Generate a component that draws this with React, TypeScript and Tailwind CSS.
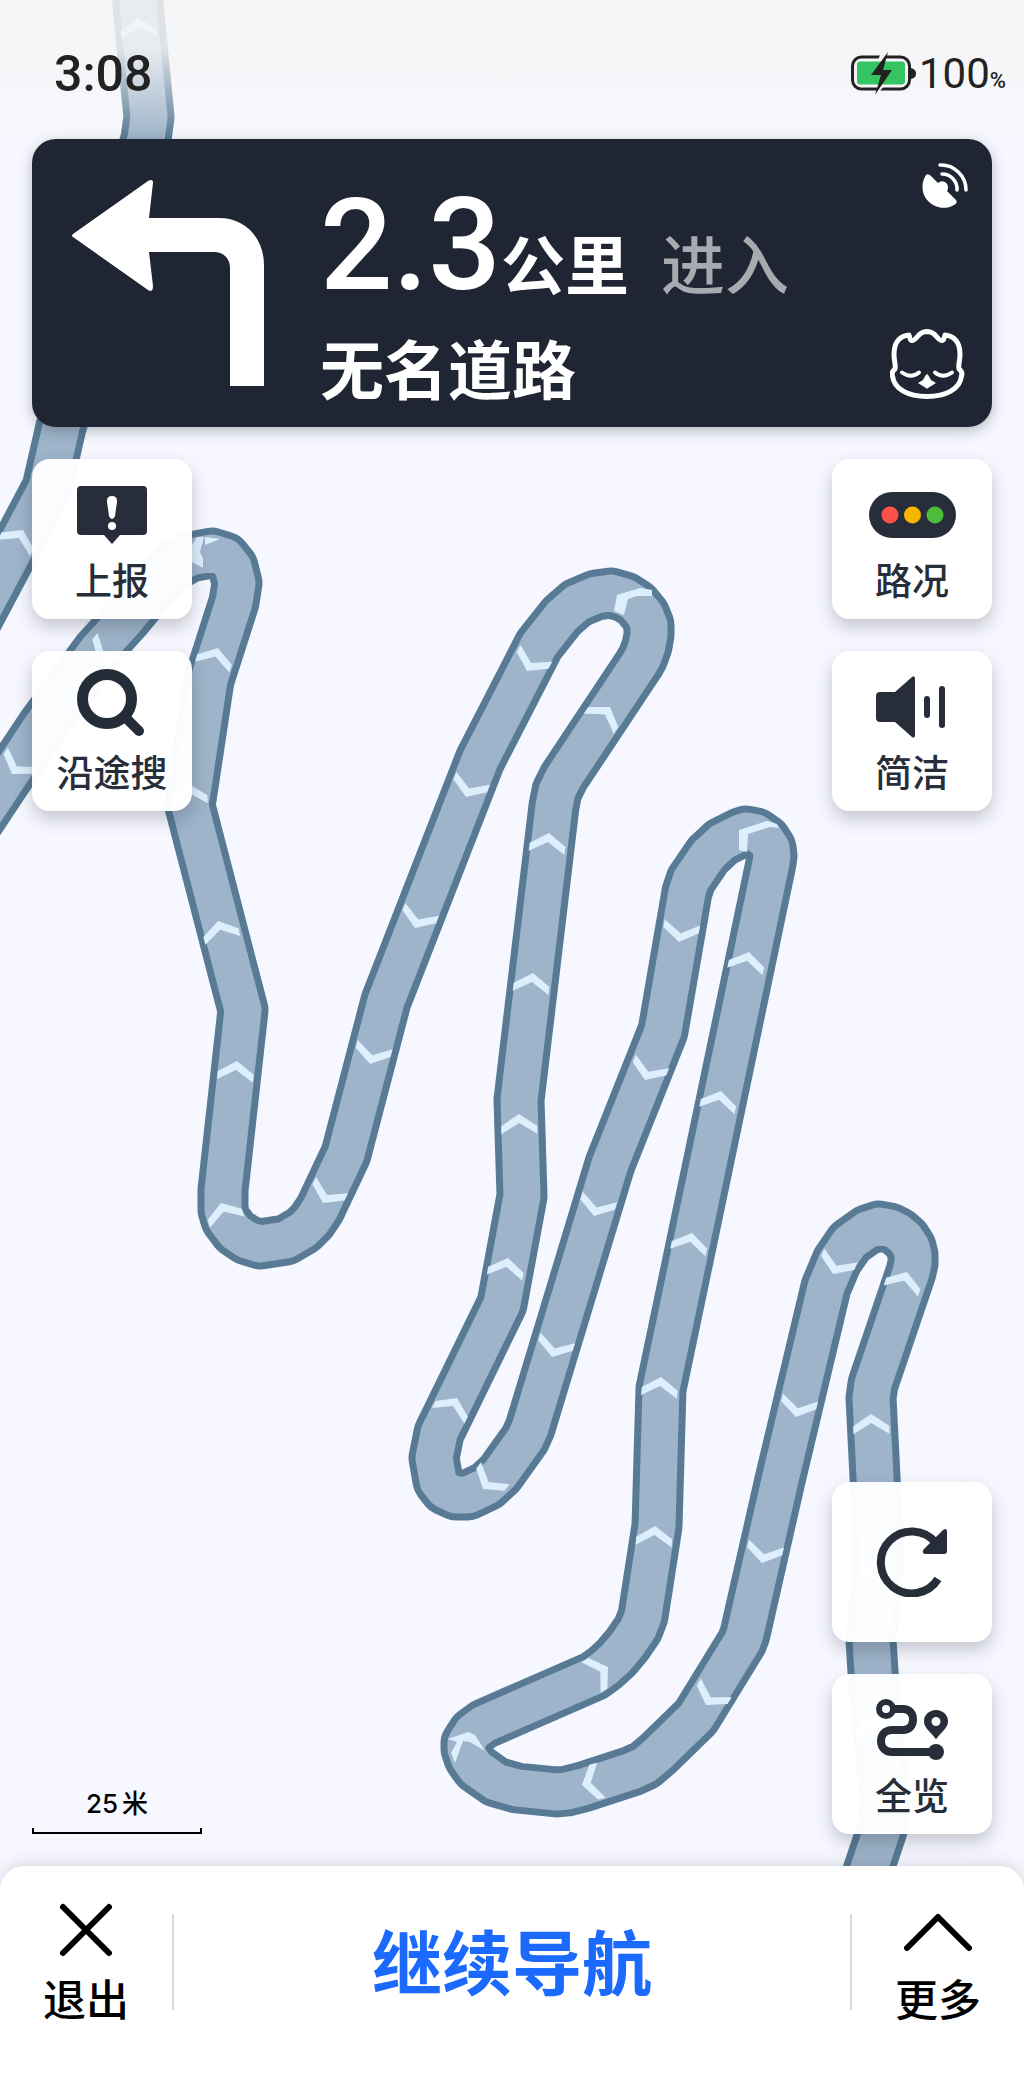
import type { ReactNode } from "react";

const ROADS = [
  "M138 -20 L138 5 L149 117 L146 139 L61 427 L47 488 L-40 652",
  "M-60 880 L42 726 L97 651 L126 619 L158 580 L172 567 L190 557 L212 553 L225 557 L233 567 L237 583 L234 602 L209 680 L190 806 L243 1010 L223 1190 L223 1210 L226 1220 L235 1232 L247 1240 L260 1244 L286 1240 L303 1230 L312 1221 L320 1209 L346 1154 L386 1001 L480 760 L539 645 L562 616 L577 603 L596 595 L611 593 L625 597 L636 604 L645 615 L649 625 L649 635 L647 646 L643 657 L639 664 L564 777 L557 791 L554 806 L519 1100 L522 1196 L502 1304 L439 1433 L434 1458 L438 1481 L445 1490 L456 1495 L468 1495 L487 1486 L500 1474 L525 1439 L530 1428 L610 1164 L663 1031 L687 892 L691 880 L708 855 L722 842 L740 833 L746 831 L756 833 L766 840 L771 848 L772 856 L771 863 L661 1389 L657 1526 L643 1616 L638 1629 L627 1645 L616 1658 L605 1668 L594 1676 L484 1724 L473 1732 L466 1743 L466 1749 L469 1758 L476 1768 L496 1782 L517 1788 L557 1792 L567 1791 L583 1787 L632 1771 L645 1765 L658 1754 L696 1717 L742 1642 L745 1634 L780 1480 L826 1287 L837 1261 L850 1242 L867 1230 L879 1226 L890 1228 L898 1232 L906 1239 L911 1247 L913 1255 L913 1263 L911 1272 L873 1384 L871 1398 L875 1477 L879 1560 L871 1640 L873 1672 L885 1800 L882 1830 L860 1895",
];

// [tip x, tip y, heading in degrees clockwise from north]
const ARROWS: [number, number, number][] = [
  [138, 18, -4], [23, 530, 27], [98, 660, 221], [12, 774, 213], [218, 648, 17],
  [189, 784, -2], [218, 921, -14], [237, 1061, 6], [221, 1203, -18], [323, 1203, 207],
  [370, 1064, 195], [415, 928, 201], [466, 797, 201], [527, 671, 208], [610, 707, 34],
  [549, 833, 7], [533, 973, 7], [519, 1114, -1], [508, 1258, 10], [457, 1398, 26],
  [483, 1489, 218], [552, 1357, 197], [594, 1216, 197], [645, 1080, 202], [679, 942, 190],
  [749, 952, 12], [721, 1091, 12], [692, 1233, 12], [661, 1377, 6], [655, 1526, 4],
  [608, 1667, 58], [582, 1785, 256], [706, 1705, 211], [762, 1563, 193], [796, 1417, 193],
  [833, 1274, 203], [907, 1272, 18], [871, 1414, -1], [876, 1560, 0], [874, 1716, 0],
];

const BENT_ARROWS = [
  "M617 595 L640 588 L652 590 L652 596 L637 596 L628 599 L624 615 L614 611 Z",
  "M739 830 L767 821 L777 824 L779 828 L770 827 L748 834 L747 852 L739 850 Z",
  "M448 1739 L468 1732 L475 1735 L485 1751 L470 1742 L463 1741 L455 1763 L451 1753 L457 1742 Z",
  "M192 545 L197 537 L204 537 L200 552 L203 558 L203 568 L192 562 Z M205 537 L220 539 L205 545 Z",
];

function RouteMap() {
  return (
    <svg
      className="absolute inset-0 h-full w-full"
      viewBox="0 0 1024 2089"
      preserveAspectRatio="xMidYMin slice"
      aria-hidden="true"
    >
      {ROADS.map((d) => (
        <g key={d} fill="none" strokeLinejoin="round">
          <path d={d} stroke="#587a95" strokeWidth="51" />
          <path d={d} stroke="#9eb4ca" strokeWidth="37" />
        </g>
      ))}
      <g fill="#ddeffd">
        {ARROWS.map(([x, y, a]) => (
          <path
            key={`${x}-${y}`}
            d="M0 0 L18 12 V20 L0 9 L-18 20 V12 Z"
            transform={`translate(${x} ${y}) rotate(${a})`}
          />
        ))}
        {BENT_ARROWS.map((d) => (
          <path key={d} d={d} />
        ))}
      </g>
    </svg>
  );
}

function BatteryIcon() {
  return (
    <svg width="66" height="43" viewBox="0 0 66 43" aria-label="充电中" role="img">
      <rect x="1.5" y="5" width="57" height="32" rx="9" fill="none" stroke="#222" strokeWidth="3" />
      <path d="M60 16 q5 1 5 5.500 q0 4.500 -5 5.500 Z" fill="#222" />
      <rect x="6" y="9.500" width="48" height="23" rx="3" fill="#33c464" />
      <path d="M29 3 H35 L31 8 H27 Z M27 34 H33 L29 39 H26 Z" fill="#f5f6f9" />
      <path d="M37 0 L20 23 H30 L24 43 L41 18 H32 Z" fill="#222" />
    </svg>
  );
}

function TurnLeftIcon() {
  return (
    <svg className="shrink-0" width="194" height="210" viewBox="0 0 194 210" fill="#fff" role="img" aria-label="左转">
      <path d="M1 55 L76 2 Q81 -1 81 4 L77 39 H147 C174 39 192 60 192 86 V207 H158 V89 C158 80 152 73 142 73 H77 L81 107 Q81 114 76 111 L1 58 Q-1 57 1 55 Z" />
    </svg>
  );
}

function SatelliteIcon() {
  return (
    <svg width="46" height="46" viewBox="0 0 46 46" role="img" aria-label="卫星信号">
      <path
        d="M4 12 Q6 10 9 13 L16 20 Q19 17 23 19 Q28 22 25 28 L34 37 Q36 40 32 42 C22 48 9 44 3 34 C-1 27 0 18 4 12 Z"
        fill="#fff"
      />
      <g fill="none" stroke="#fff" strokeWidth="3.500" strokeLinecap="round">
        <path d="M20 11 A15 15 0 0 1 35 27" />
        <path d="M18 2 A25 25 0 0 1 44 27" />
      </g>
    </svg>
  );
}

function OwlIcon() {
  return (
    <svg width="78" height="70" viewBox="0 0 78 70" role="img" aria-label="语音助手">
      <g fill="none" stroke="#fff" strokeLinecap="round" strokeLinejoin="round">
        <path
          strokeWidth="5"
          d="M37 2.500 Q31 3 28 7 Q24 12 21.500 11.500 Q20 11 19 6 C10 7 4 13 4 25 C4 33 6 35 5 40 Q1 43 2.500 47 C4 60 18 67.500 37 67.500 C56 67.500 70 60 71.500 47 Q73 43 69 40 C68 35 70 33 70 25 C70 13 64 7 55 6 Q54 11 52.500 11.500 Q50 12 46 7 Q43 3 37 2.500 Z"
        />
        <path strokeWidth="4" d="M12 43.500 Q21 50 29 43.500" />
        <path strokeWidth="4" d="M45 43.500 Q53 50 62 43.500" />
      </g>
      <path d="M37 45 Q38 45 41 51 L46 54 L38 59 Q37 60 36 59 L28 54 L33 51 Q36 45 37 45 Z" fill="#fff" />
    </svg>
  );
}

function ReportIcon() {
  return (
    <svg width="70" height="58" viewBox="0 0 70 58" aria-hidden="true">
      <path d="M4 0 H66 Q70 0 70 4 V45 Q70 49 66 49 H43 L36 57 Q35 58 34 57 L27 49 H4 Q0 49 0 45 V4 Q0 0 4 0 Z" fill="#272d3a" />
      <path d="M35 10 Q40.500 10 40 16 L38 30 Q37 33 35 33 Q33 33 32 30 L30 16 Q29.500 10 35 10 Z" fill="#fff" />
      <circle cx="35" cy="40" r="4" fill="#fff" />
    </svg>
  );
}

function SearchIcon() {
  return (
    <svg width="70" height="76" viewBox="0 0 70 76" fill="none" stroke="#242c38" aria-hidden="true">
      <circle cx="30" cy="30" r="24.500" strokeWidth="11" />
      <path d="M48 48 L62 62" strokeWidth="10" strokeLinecap="round" />
    </svg>
  );
}

function TrafficIcon() {
  return (
    <svg width="87" height="46" viewBox="0 0 87 46" aria-hidden="true">
      <rect width="87" height="46" rx="23" fill="#272e3a" />
      <circle cx="21" cy="23" r="8.500" fill="#fb5149" />
      <circle cx="43.500" cy="23" r="8.500" fill="#f8b500" />
      <circle cx="66" cy="23" r="8.500" fill="#4cbd3b" />
    </svg>
  );
}

function SpeakerIcon() {
  return (
    <svg width="72" height="62" viewBox="0 0 72 62" fill="#272e3a" aria-hidden="true">
      <path d="M4 16 H19 L36 1 Q39 -1 39 3 V59 Q39 63 36 61 L19 46 H4 Q0 46 0 42 V20 Q0 16 4 16 Z" />
      <rect x="48" y="20" width="6" height="22" rx="3" />
      <rect x="63" y="10" width="6" height="42" rx="3" />
    </svg>
  );
}

function RefreshIcon() {
  return (
    <svg width="72" height="70" viewBox="0 0 72 70" aria-hidden="true">
      <path d="M60 16 A31 31 0 1 0 62 52" fill="none" stroke="#272e3a" strokeWidth="8" />
      <path d="M67 3 Q71 0 71 5 V24 Q71 27 68 27 H49 Q45 26 48 22 Z" fill="#272e3a" />
    </svg>
  );
}

function OverviewIcon() {
  return (
    <svg width="74" height="62" viewBox="0 0 74 62" fill="none" stroke="#272e3a" aria-hidden="true">
      <circle cx="11" cy="10" r="7" strokeWidth="6" />
      <path d="M19 10 H28 C34 10 38 14 38 20.500 C38 27 34 31 28 31 H17 C10 31 6 36 6 42 C6 48 10 53 17 53 H60" strokeWidth="8" />
      <circle cx="61" cy="53" r="8" fill="#272e3a" stroke="none" />
      <path
        fillRule="evenodd"
        d="M61 11 C68 11 73 16 73 22 C73 29 68 31 62 39 Q61 41 60 39 C54 31 49 29 49 22 C49 16 54 11 61 11 Z M61 18 A4.500 4.500 0 1 0 61 27 A4.500 4.500 0 1 0 61 18 Z"
        fill="#272e3a"
        stroke="none"
      />
    </svg>
  );
}

function MapButton({ label, name, children }: { label?: string; name?: string; children: ReactNode }) {
  return (
    <button
      type="button"
      aria-label={name}
      className="flex size-40 flex-col items-center justify-center rounded-[18px] bg-white/97 text-[#272e3a] shadow-[0_8px_18px_rgba(30,35,50,0.24)]"
    >
      {label ? (
        <>
          <span className="flex h-20 items-center justify-center pt-4">{children}</span>
          <span className="pt-2 text-[37px] leading-[56px] font-medium">{label}</span>
        </>
      ) : (
        children
      )}
    </button>
  );
}

export default function App() {
  return (
    <div className="relative flex min-h-screen flex-col overflow-hidden bg-[#f7f8ff] font-['Roboto','Noto_Sans_CJK_SC',sans-serif]">
      <RouteMap />

      <header className="relative flex h-[139px] items-center justify-between bg-linear-to-b from-[#f5f5f5]/85 from-35% to-transparent pt-2 pr-[18px] pl-[54px] text-[#222]">
        <time className="text-[50px] leading-none font-medium">3:08</time>
        <div className="flex items-center gap-0.5">
          <BatteryIcon />
          <p className="text-[42px] leading-none">
            100<span className="text-[22px] font-medium">%</span>
          </p>
        </div>
      </header>

      <section className="relative mx-8 flex h-72 rounded-3xl bg-[#1f2532] pt-10 pr-6 pl-10 font-medium text-white shadow-[0_4px_14px_rgba(30,35,50,0.3)]">
        <TurnLeftIcon />
        <div className="ml-[54px] grow">
          <p className="flex items-baseline">
            <span className="text-[128px] leading-[132px]">2.3</span>
            <span className="text-[64px] leading-none font-bold">公里</span>
            <span className="ml-8 text-[64px] leading-none text-[#a7abb0]">进入</span>
          </p>
          <h1 className="mt-4 text-[64px] leading-[92px] font-bold">无名道路</h1>
        </div>
        <div className="-mt-4 flex flex-col items-end justify-between pb-7">
          <SatelliteIcon />
          <OwlIcon />
        </div>
      </section>

      <div className="relative flex grow justify-between px-8 pt-8">
        <div className="flex flex-col justify-between pb-8">
          <div className="flex flex-col gap-8">
            <MapButton label="上报">
              <ReportIcon />
            </MapButton>
            <MapButton label="沿途搜">
              <SearchIcon />
            </MapButton>
          </div>
          <div className="flex w-[170px] flex-col items-center text-black">
            <p className="flex gap-1 text-[26px] leading-9 font-medium">
              <span className="font-['Inter',sans-serif]">25</span>
              <span>米</span>
            </p>
            <div className="mt-1.5 h-1.5 w-full border-x-2 border-b-2 border-black" />
          </div>
        </div>
        <div className="flex flex-col justify-between pb-8">
          <div className="flex flex-col gap-8">
            <MapButton label="路况">
              <TrafficIcon />
            </MapButton>
            <MapButton label="简洁">
              <SpeakerIcon />
            </MapButton>
          </div>
          <div className="flex flex-col gap-8">
            <MapButton name="刷新">
              <RefreshIcon />
            </MapButton>
            <MapButton label="全览">
              <OverviewIcon />
            </MapButton>
          </div>
        </div>
      </div>

      <footer className="relative flex items-start rounded-t-3xl bg-white pt-9 pb-[57px] font-medium text-black shadow-[0_-2px_16px_rgba(30,35,50,0.16)]">
        <button type="button" className="flex w-[172px] flex-col items-center">
          <svg width="56" height="56" viewBox="0 0 56 56" fill="none" stroke="#000" strokeWidth="6" strokeLinecap="round" aria-hidden="true">
            <path d="M5 5 L51 51 M51 5 L5 51" />
          </svg>
          <span className="mt-3 text-[43px] leading-[62px]">退出</span>
        </button>
        <button
          type="button"
          className="mt-3 h-24 grow border-x-2 border-[#d9dadb] pt-2 text-[70px] leading-none font-bold text-[#1c69fe]"
        >
          继续导航
        </button>
        <button type="button" className="flex w-[172px] flex-col items-center">
          <svg width="68" height="56" viewBox="0 0 68 56" fill="none" stroke="#000" strokeWidth="6" strokeLinecap="round" strokeLinejoin="round" aria-hidden="true">
            <path d="M3 46 L34 15 L65 46" />
          </svg>
          <span className="mt-3 text-[43px] leading-[62px]">更多</span>
        </button>
      </footer>
    </div>
  );
}
